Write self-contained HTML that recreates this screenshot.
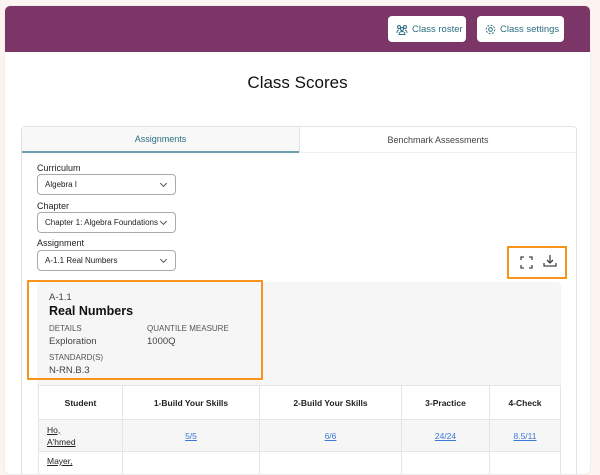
<!DOCTYPE html>
<html><head><style>
*{box-sizing:border-box;margin:0;padding:0}
body{width:600px;height:465px;overflow:hidden;background:#fcf4f1;font-family:"Liberation Sans",sans-serif;color:#222;position:relative}
.card{position:absolute;left:4px;top:5px;width:587px;height:470px;background:#fff;border-radius:6px;overflow:hidden;border:1px solid #eee}
.hdr{height:46px;background:#7b3566;position:relative}
.btn{position:absolute;top:10px;height:26px;background:#fff;border-radius:4px;color:#2b6f80;font-size:9.5px;display:flex;align-items:center;padding-left:8px;gap:4px;white-space:nowrap}
h1{position:absolute;top:67px;width:100%;text-align:center;font-size:17px;font-weight:normal;color:#111}
.tabs{position:absolute;left:16px;top:120px;width:556px;height:360px;border:1px solid #e3e3e3;border-radius:4px}
.tab{position:absolute;top:0;height:26px;font-size:9px;display:flex;align-items:center;justify-content:center}
.lbl{position:absolute;left:15px;font-size:9px;color:#222}
.sel{position:absolute;left:15px;width:139px;height:21px;border:1px solid #aaa;border-radius:4px;font-size:8px;padding-left:7px;display:flex;align-items:center;white-space:nowrap}
.sel:after{content:"";position:absolute;right:9px;top:6px;width:4px;height:4px;border-right:1px solid #555;border-bottom:1px solid #555;transform:rotate(45deg)}
.info{position:absolute;left:15px;top:155px;width:524px;height:110px;background:#f6f6f6;border-radius:4px}
.sm{font-size:8px;color:#555;position:absolute}
.v{font-size:9.5px;color:#444;position:absolute}
table{position:absolute;left:16px;top:258px;width:523px;border-collapse:collapse;background:#fff}
td,th{border:1px solid #e5e5e5;font-size:8.5px;text-align:center}
th{height:34px;font-weight:bold}
td{height:32px}
td a{color:#3a79d6;text-decoration:underline}
</style></head><body>
<div class="card">
<div class="hdr">
<div class="btn" style="left:383px;width:78px"><svg width="12" height="11" viewBox="0 0 12 11" fill="none" stroke="#2b6f80" stroke-width="1"><circle cx="3" cy="3" r="1.5"/><circle cx="9" cy="3" r="1.5"/><circle cx="6" cy="5" r="1.5"/><path d="M1 9c0-2 1-3 2-3M11 9c0-2-1-3-2-3M3 10.5c0-2 1.5-3 3-3s3 1 3 3z"/></svg>Class roster</div>
<div class="btn" style="left:472px;width:87px"><svg width="11" height="11" viewBox="0 0 12 12" fill="none" stroke="#2b6f80" stroke-width="1.1"><circle cx="6" cy="6" r="2"/><circle cx="6" cy="6" r="4.6" stroke-dasharray="2 1.6"/></svg>Class settings</div>
</div>
<h1>Class Scores</h1>
<div class="tabs">
<div class="tab" style="left:0;width:277px;background:#f8f8f8;color:#2b6f80;border-bottom:2px solid #6a9fb0">Assignments</div>
<div class="tab" style="left:277px;width:277px;color:#444;border-left:1px solid #e3e3e3;border-bottom:1px solid #eee">Benchmark Assessments</div>
<div class="lbl" style="top:36px">Curriculum</div>
<div class="sel" style="top:47px">Algebra I</div>
<div class="lbl" style="top:74px">Chapter</div>
<div class="sel" style="top:85px">Chapter 1: Algebra Foundations</div>
<div class="lbl" style="top:111px">Assignment</div>
<div class="sel" style="top:123px">A-1.1 Real Numbers</div>
<div style="position:absolute;left:485px;top:119px;width:60px;height:33px;border:2px solid #f7941d"></div>
<svg style="position:absolute;left:498px;top:129px" width="13" height="13" viewBox="0 0 13 13" fill="none" stroke="#444" stroke-width="1.3"><path d="M1 4V1h3M9 1h3v3M12 9v3H9M4 12H1V9"/></svg>
<svg style="position:absolute;left:521px;top:127px" width="14" height="14" viewBox="0 0 14 14" fill="none" stroke="#444" stroke-width="1.3"><path d="M7 1v8M4 6l3 3 3-3M1 9v3h12V9"/></svg>
<div class="info">
<div class="v" style="left:12px;top:10px">A-1.1</div>
<div style="position:absolute;left:12px;top:22px;font-size:12.5px;font-weight:bold;color:#111">Real Numbers</div>
<div class="sm" style="left:12px;top:42px">DETAILS</div>
<div class="sm" style="left:110px;top:42px">QUANTILE MEASURE</div>
<div class="v" style="left:12px;top:54px">Exploration</div>
<div class="v" style="left:110px;top:54px">1000Q</div>
<div class="sm" style="left:12px;top:71px">STANDARD(S)</div>
<div class="v" style="left:12px;top:83px">N-RN.B.3</div>
</div>
<table>
<tr><th style="width:84px">Student</th><th style="width:137px">1-Build Your Skills</th><th style="width:142px">2-Build Your Skills</th><th style="width:88px">3-Practice</th><th>4-Check</th></tr>
<tr style="background:#f6f6f6"><td style="text-align:left;padding-left:8px;line-height:12px"><a style="color:#222">Ho,<br>A'hmed</a></td><td><a>5/5</a></td><td><a>6/6</a></td><td><a>24/24</a></td><td><a>8.5/11</a></td></tr>
<tr><td style="text-align:left;padding-left:8px;vertical-align:top;padding-top:4px"><a style="color:#222;text-decoration:underline">Mayer,</a></td><td></td><td></td><td></td><td></td></tr>
</table>
</div>
</div>
<div style="position:absolute;left:27px;top:280px;width:236px;height:100px;border:2px solid #f7941d"></div>
</body></html>
